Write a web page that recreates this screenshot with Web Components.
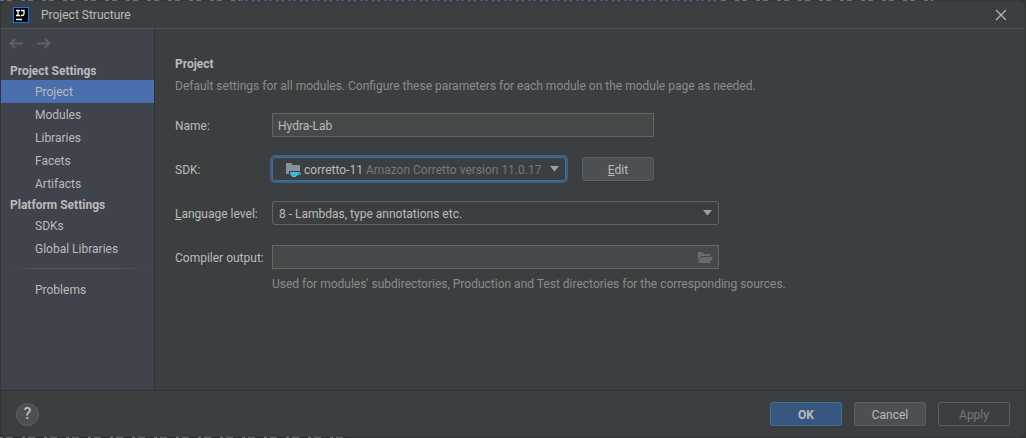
<!DOCTYPE html>
<html lang="en">
<head>
<meta charset="utf-8">
<title>Project Structure</title>
<style>
  html, body { height: 100%; }
  body { margin: 0; background: #2b2b2b; font: 12px/16px Roboto, "Open Sans", sans-serif; color: #bbbbbb; }
</style>
</head>
<body>
<project-dialog></project-dialog>
<script>
const define = (name, html, setup) => customElements.define(name, class extends HTMLElement {
  constructor() {
    super();
    const t = document.createElement('template');
    t.innerHTML = html;
    this.attachShadow({ mode: 'open' }).append(t.content.cloneNode(true));
  }
  connectedCallback() { if (setup) setup(this, this.shadowRoot); }
});

define('title-bar', `
<style>
  :host { display: flex; align-items: center; height: 27px; padding: 0 17px 0 12px; border-bottom: 1px solid #555555; }
  h1 { flex: 1; margin: 0 0 0 12px; font: inherit; }
  svg { display: block; }
  button { padding: 0; border: 0; background: none; color: #b4b6b8; }
</style>
<svg width="16" height="16" viewBox="0 0 16 16"><path d="M0 0h16v16H0z" fill="#087cfa"/><path d="M1 1h14v14H1z" fill="#000"/><path d="M3 3.500h4M5 3.500v5M3 8.500h4M8 3.500h3v3.200q0 1.800-1.800 1.800H7.800M3 12.500h6" fill="none" stroke="#fff" stroke-width="1.300"/></svg>
<h1><slot></slot></h1>
<button aria-label="Close"><svg width="14" height="14" viewBox="0 0 14 14"><path d="M2 2l10 10M12 2L2 12" stroke="currentColor" stroke-width="1.200"/></svg></button>
`);

define('nav-arrows', `
<style>
  :host { display: flex; gap: 12px; box-sizing: border-box; padding: 7px 8px 0; height: 32px; }
  button { padding: 0; border: 0; background: none; color: #5d6064; height: 15px; }
  svg { display: block; }
</style>
<button aria-label="Back" disabled><svg width="15" height="15" viewBox="0 0 15 15" fill="none" stroke="currentColor" stroke-width="1.800"><path d="M14 7.500H2M6 3L1.500 7.500 6 12"/></svg></button>
<button aria-label="Forward" disabled><svg width="15" height="15" viewBox="0 0 15 15" fill="none" stroke="currentColor" stroke-width="1.800"><path d="M1 7.500h12M9 3l4.500 4.500L9 12"/></svg></button>
`);

define('nav-group', `
<style>
  :host { display: block; }
  h2 { margin: 0; padding: 2px 0 0 9px; font-size: 12px; line-height: 17px; font-weight: 700; }
</style>
<h2></h2><slot></slot>
`, (el, root) => { root.querySelector('h2').textContent = el.getAttribute('heading'); });

define('nav-item', `
<style>
  :host { display: block; }
  a { display: block; padding: 2px 0 0 34px; line-height: 21px; color: inherit; text-decoration: none; }
  :host([selected]) a { background: #4b6eaf; }
</style>
<a href="#"><slot></slot></a>
`);

define('side-bar', `
<style>
  :host { display: block; background: #3e434c; border-right: 1px solid #323232; }
  hr { height: 1px; margin: 8px 8px 9px; border: 0; background: linear-gradient(90deg, transparent, #555555 20%, #555555 80%, transparent); }
</style>
<nav aria-label="Settings sections">
  <nav-arrows></nav-arrows>
  <nav-group heading="Project Settings">
    <nav-item selected>Project</nav-item><nav-item>Modules</nav-item><nav-item>Libraries</nav-item><nav-item>Facets</nav-item><nav-item>Artifacts</nav-item>
  </nav-group>
  <nav-group heading="Platform Settings">
    <nav-item>SDKs</nav-item><nav-item>Global Libraries</nav-item>
  </nav-group>
  <hr>
  <nav-item>Problems</nav-item>
</nav>
`);

define('push-button', `
<style>
  :host { display: block; width: 72px; }
  button { display: block; width: 100%; height: 24px; padding: 2px 0 0; border: 1px solid #5e6060; border-radius: 3px; background: #4c5052; color: #bbbbbb; font: inherit; box-shadow: 0 1px 0 #36383a; }
  :host([kind=primary]) button { background: #365880; border-color: #4c708c; font-weight: 700; }
  :host([kind=off]) button { background: none; color: #777777; box-shadow: none; }
</style>
<button><slot></slot></button>
`, (el, root) => { root.querySelector('button').disabled = el.getAttribute('kind') === 'off'; });

define('project-form', `
<style>
  :host { display: block; padding: 27px 20px 20px; }
  h2 { margin: 0; font-size: 12px; line-height: 16px; font-weight: 700; }
  p { margin: 0; color: #8c8c8c; }
  .intro { margin: 6px 0 19px; }
  form { display: grid; grid-template-columns: 97px minmax(0, 447px); row-gap: 20px; align-items: center; }
  label { padding-top: 2px; white-space: nowrap; }
  .line { display: grid; grid-template-columns: minmax(0, 294px) 72px; gap: 16px; }
  input, select { box-sizing: border-box; display: block; width: 100%; height: 24px; margin: 0; padding: 2px 5px 0; border: 1px solid #646464; border-radius: 0; background: #45494a; color: #bbbbbb; font: inherit; outline: 0; }
  .name { width: 382px; max-width: 100%; }
  .combo, .path { position: relative; }
  select { appearance: none; padding: 2px 6px 0; background: none; border-radius: 3px; }
  .arrow { position: absolute; right: 6px; top: 9px; width: 11px; height: 6px; pointer-events: none; }
  .sdk select { color: transparent; border-color: #466d94; box-shadow: 0 0 0 2px #3d6185; }
  .sdk option { color: #bbbbbb; background: #3c3f41; }
  .value { position: absolute; inset: 0; display: flex; align-items: center; padding: 2px 0 0 13px; pointer-events: none; white-space: pre; }
  .value svg { margin-right: 3px; }
  .value span { color: #787878; }
  .path svg { position: absolute; right: 6px; top: 5px; }
  .hint { grid-column: 2; margin: -13px 0 0; white-space: nowrap; }
</style>
<h2>Project</h2>
<p class="intro">Default settings for all modules. Configure these parameters for each module on the module page as needed.</p>
<form>
  <label for="name">Name:</label>
  <input id="name" class="name" value="Hydra-Lab">
  <label for="sdk">SDK:</label>
  <div class="line">
    <div class="combo sdk">
      <select id="sdk"><option aria-label="corretto-11 Amazon Corretto version 11.0.17"></option></select>
      <div class="value"><svg width="16" height="16" viewBox="0 0 16 16"><path d="M1 1h5l2 2h7v6H4v3H1z" fill="#87939a"/><path d="M5 10h9q2 0 2 1.200Q16 13 13 13q-.600 1-2 1.200V15H7v-.800Q5 13.500 5 10zm9 1-.300 1q1.300 0 1.300-.500T14 11z" fill="#40b6e0"/></svg>corretto-11 <span>Amazon Corretto version 11.0.17</span></div>
      <svg class="arrow" viewBox="0 0 11 6"><path d="M1 0h9L5.500 5.500z" fill="#9da0a3"/></svg>
    </div>
    <push-button><u>E</u>dit</push-button>
  </div>
  <label for="level"><u>L</u>anguage level:</label>
  <div class="combo">
    <select id="level"><option>8 - Lambdas, type annotations etc.</option></select>
    <svg class="arrow" viewBox="0 0 11 6"><path d="M1 0h9L5.500 5.500z" fill="#9da0a3"/></svg>
  </div>
  <label for="output">Compiler output:</label>
  <div class="path">
    <input id="output">
    <svg width="16" height="14" viewBox="0 0 16 14"><path d="M1 2h4l2 2h6v2H4L1 11z" fill="#656d72"/><path d="M4 7h12l-3 6H1z" fill="#656d72"/></svg>
  </div>
  <p class="hint">Used for modules' subdirectories, Production and Test directories for the corresponding sources.</p>
</form>
`);

define('dialog-footer', `
<style>
  :host { display: flex; align-items: center; gap: 12px; height: 46px; padding: 0 15px; border-top: 1px solid #323232; }
  .help { box-sizing: border-box; width: 23px; height: 23px; margin-right: auto; padding: 0; border: 1px solid #5e6060; border-radius: 50%; background: #4c5052; color: #bbbbbb; font: 500 16px/20px Roboto, sans-serif; }
</style>
<button class="help" aria-label="Help">?</button>
<push-button kind="primary">OK</push-button>
<push-button>Cancel</push-button>
<push-button kind="off">Apply</push-button>
`);

define('project-dialog', `
<style>
  :host { display: flex; box-sizing: border-box; min-height: 100%; padding: 1px; height: 100%;
    background:
      repeating-linear-gradient(90deg, #777777 0 3px, #2b2b2b 3px 6px, #666666 6px 13px, #2b2b2b 13px 22px) left bottom / 34% 1px no-repeat,
      repeating-linear-gradient(90deg, #41618e 0 3px, #343638 3px 5px, #41618e 5px 8px, #343638 8px 12px) 240px 0 / 480px 1px no-repeat,
      repeating-linear-gradient(90deg, #6c7073 0 4px, #343638 4px 7px, #6c7073 7px 12px, #343638 12px 21px) left top / 91% 1px no-repeat,
      #343638; }
  .window { flex: 1; display: flex; flex-direction: column; border-radius: 7px; background: #3c3f41; overflow: hidden; }
  .body { flex: 1; display: grid; grid-template-columns: 154px minmax(0, 1fr); }
</style>
<div class="window" role="dialog" aria-label="Project Structure">
  <title-bar>Project Structure</title-bar>
  <div class="body"><side-bar></side-bar><project-form></project-form></div>
  <dialog-footer></dialog-footer>
</div>
`);
</script>
</body>
</html>
